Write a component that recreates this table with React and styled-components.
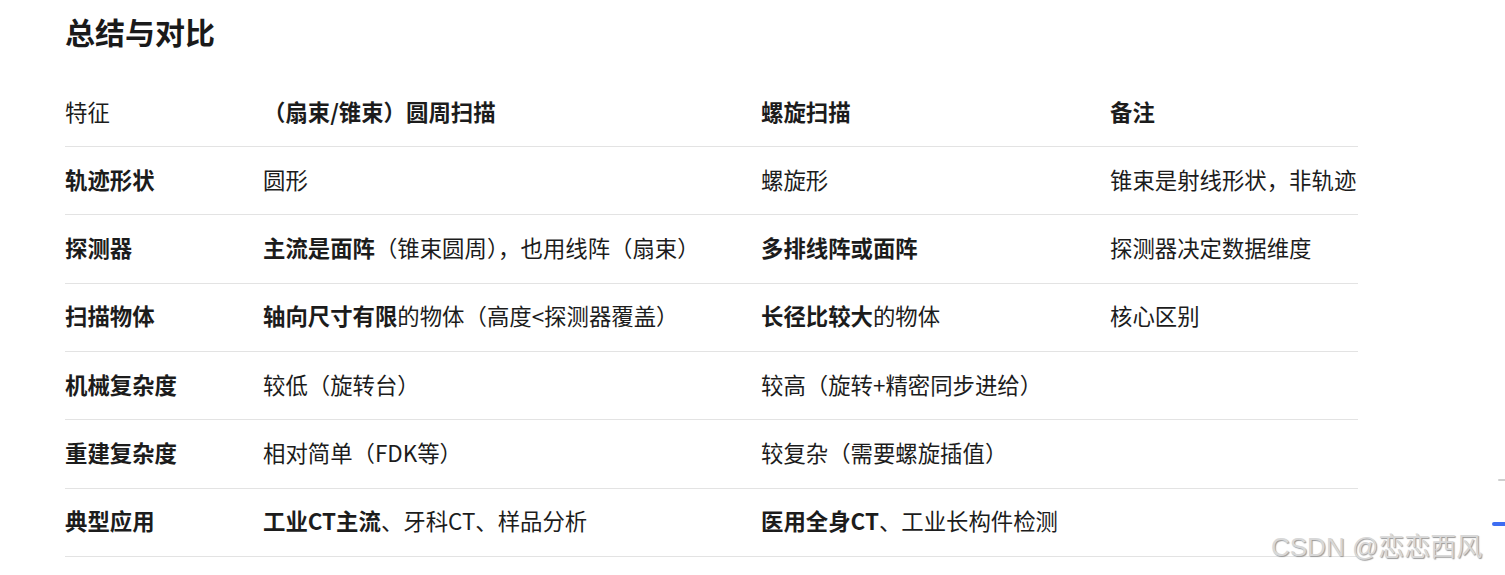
import React from "react";
import styled, { createGlobalStyle } from "styled-components";

const GlobalStyle = createGlobalStyle`
  html, body {
    margin: 0;
    padding: 0;
    background: #fff;
  }
  body {
    font-family: "Noto Sans CJK SC", "Liberation Sans", sans-serif;
    color: #1c1c1c;
  }
`;

const Page = styled.div`
  position: relative;
  width: 1505px;
  height: 575px;
  overflow: hidden;
  padding-left: 65px;
  box-sizing: border-box;
`;

const Title = styled.h2`
  margin: 0;
  padding-top: 9px;
  height: 79px;
  box-sizing: border-box;
  font-size: 30px;
  line-height: 44px;
  font-weight: 700;
  color: #1a1a1a;
`;

const Table = styled.div`
  width: 1293px;
`;

const Row = styled.div`
  display: grid;
  grid-template-columns: 198px 498px 349px 248px;
  align-items: center;
  height: ${(p) => (p.$head ? "68px" : "68.33px")};
  border-bottom: 1px solid #e3e3e3;
  box-sizing: border-box;
`;

const Cell = styled.div`
  font-size: 22.4px;
  line-height: 30px;
  padding-bottom: 4px;
  white-space: nowrap;
  font-weight: ${(p) => (p.$bold ? 700 : 400)};
  color: #1c1c1c;
`;

const B = styled.b`
  font-weight: 700;
`;

const Watermark = styled.div`
  position: absolute;
  left: 1271px;
  top: 531px;
  font-family: "Liberation Sans", "Noto Sans CJK SC", sans-serif;
  font-size: 26px;
  line-height: 32px;
  color: #d8d8d8;
  text-shadow: 1px 1px 1px #9a9a9a;
  white-space: nowrap;
`;

const EdgeMark = styled.div`
  position: absolute;
  right: 0;
  top: ${(p) => p.$top}px;
  width: ${(p) => p.$w}px;
  height: ${(p) => p.$h}px;
  background: ${(p) => p.$color};
  border-radius: 2px 0 0 2px;
`;

const rows = [
  [<B>轨迹形状</B>, "圆形", "螺旋形", "锥束是射线形状，非轨迹"],
  [
    <B>探测器</B>,
    <>
      <B>主流是面阵</B>（锥束圆周），也用线阵（扇束）
    </>,
    <B>多排线阵或面阵</B>,
    "探测器决定数据维度",
  ],
  [
    <B>扫描物体</B>,
    <>
      <B>轴向尺寸有限</B>的物体（高度&lt;探测器覆盖）
    </>,
    <>
      <B>长径比较大</B>的物体
    </>,
    "核心区别",
  ],
  [<B>机械复杂度</B>, "较低（旋转台）", "较高（旋转+精密同步进给）", ""],
  [<B>重建复杂度</B>, "相对简单（FDK等）", "较复杂（需要螺旋插值）", ""],
  [
    <B>典型应用</B>,
    <>
      <B>工业CT主流</B>、牙科CT、样品分析
    </>,
    <>
      <B>医用全身CT</B>、工业长构件检测
    </>,
    "",
  ],
];

export default function App() {
  return (
    <>
      <GlobalStyle />
      <Page>
        <Title>总结与对比</Title>
        <Table>
          <Row $head>
            <Cell>特征</Cell>
            <Cell $bold>（扇束/锥束）圆周扫描</Cell>
            <Cell $bold>螺旋扫描</Cell>
            <Cell $bold>备注</Cell>
          </Row>
          {rows.map((r, i) => (
            <Row key={i}>
              {r.map((c, j) => (
                <Cell key={j}>{c}</Cell>
              ))}
            </Row>
          ))}
        </Table>
        <EdgeMark $top={479} $w={7} $h={2} $color="#cfcfcf" />
        <EdgeMark $top={522} $w={13} $h={4} $color="#3d6df2" />
        <Watermark>CSDN @恋恋西风</Watermark>
      </Page>
    </>
  );
}
